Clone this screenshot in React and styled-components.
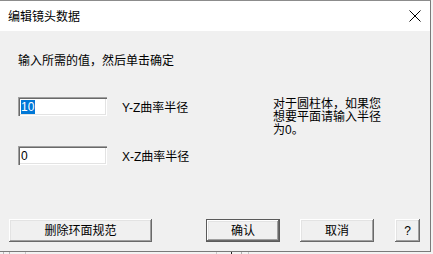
import React from "react";
import styled, { createGlobalStyle } from "styled-components";

const Global = createGlobalStyle`
  html, body { margin: 0; padding: 0; }
  body {
    width: 433px;
    height: 254px;
    overflow: hidden;
    background: #f0f0f0;
    font-family: "Liberation Sans", "Noto Sans CJK SC", sans-serif;
    font-size: 12px;
    color: #000;
  }
`;

const Page = styled.div`
  width: 433px;
  height: 254px;
  display: flex;
  flex-direction: column;
  background: #f3f3f3;
`;

const Window = styled.div`
  width: 431px;
  height: 252px;
  box-sizing: border-box;
  border-top: 1px solid #8c8c8c;
  border-right: 1px solid #7a7a7a;
  border-bottom: 1px solid #7a7a7a;
  display: flex;
  flex-direction: column;
  background: #f0f0f0;
  flex: none;
`;

const TitleBar = styled.div`
  height: 30px;
  background: #fff;
  display: flex;
  align-items: center;
  padding-left: 8px;
  padding-right: 9px;
  flex: none;
`;

const Title = styled.div`
  flex: 1;
  line-height: 14px;
  margin-top: 1px;
`;

const CloseBtn = styled.div`
  width: 12px;
  height: 12px;
  display: flex;
  margin-top: 0px;
`;

const Body = styled.div`
  flex: 1;
  display: flex;
  flex-direction: column;
  padding: 23px 0 9px 0;
`;

const Instruction = styled.div`
  line-height: 14px;
  padding-left: 18px;
`;

const Fields = styled.div`
  display: flex;
  margin-top: 29px;
  padding-left: 18px;
`;

const LeftCol = styled.div`
  width: 255px;
  display: flex;
  flex-direction: column;
  gap: 30px;
`;

const FieldRow = styled.div`
  display: flex;
  align-items: center;
  height: 19px;
`;

const TextBox = styled.div`
  width: 89px;
  height: 19px;
  box-sizing: border-box;
  background: #fff;
  box-shadow: inset 1px 1px #a0a0a0, inset 2px 2px #696969,
    inset -1px -1px #ffffff, inset -2px -2px #e3e3e3;
  padding: 3px 0 0 3px;
  line-height: 14px;
  display: flex;
`;

const Value = styled.span`
  height: 14px;
  line-height: 14px;
  padding: 0 1px 0 0;
  background: ${(p) => (p.$selected ? "#0078d7" : "transparent")};
  color: ${(p) => (p.$selected ? "#fff" : "#000")};
`;

const Label = styled.div`
  margin-left: 15px;
  line-height: 14px;
  margin-top: 3px;
`;

const Note = styled.div`
  margin-top: 1px;
  line-height: 13px;
  white-space: nowrap;
`;

const Buttons = styled.div`
  margin-top: auto;
  display: flex;
  padding-left: 9px;
  gap: 20px;
`;

const Button = styled.div`
  width: ${(p) => p.$w}px;
  height: 23px;
  box-sizing: border-box;
  display: flex;
  align-items: center;
  justify-content: center;
  background: #f0f0f0;
  line-height: 14px;
  margin-right: ${(p) => p.$mr || 0}px;
  margin-left: ${(p) => p.$ml || 0}px;
  padding-top: 1px;
  border: ${(p) => (p.$default ? "1px solid #5a5a5a" : "none")};
  box-shadow: inset -1px -1px #696969, inset 1px 1px #ffffff,
    inset -2px -2px #a0a0a0, inset 2px 2px #e3e3e3;
`;

const Under = styled.div`
  flex: 1;
  background-color: #f3f3f3;
  background-image: linear-gradient(90deg,
    transparent 3px, #b8b8b8 3px, #b8b8b8 4px, transparent 4px,
    transparent 9px, #b8b8b8 9px, #b8b8b8 10px, transparent 10px,
    transparent 25px, #c8c8c8 25px, #c8c8c8 26px, transparent 26px,
    transparent 216px, #c8c8c8 216px, #c8c8c8 217px, transparent 217px,
    transparent 231px, #222 231px, #222 232px, transparent 232px,
    transparent 241px, #b0b0b0 241px, #b0b0b0 242px, transparent 242px,
    transparent 248px, #c8c8c8 248px, #c8c8c8 249px, transparent 249px);
`;

export default function App() {
  return (
    <>
      <Global />
      <Page>
        <Window>
          <TitleBar>
            <Title>编辑镜头数据</Title>
            <CloseBtn>
              <svg width="12" height="12" viewBox="0 0 12 12">
                <path d="M0.5 0.5 L11.5 11.5 M11.5 0.5 L0.5 11.5" stroke="#000" strokeWidth="1" fill="none" />
              </svg>
            </CloseBtn>
          </TitleBar>
          <Body>
            <Instruction>输入所需的值，然后单击确定</Instruction>
            <Fields>
              <LeftCol>
                <FieldRow>
                  <TextBox>
                    <Value $selected>10</Value>
                  </TextBox>
                  <Label>Y-Z曲率半径</Label>
                </FieldRow>
                <FieldRow>
                  <TextBox>
                    <Value>0</Value>
                  </TextBox>
                  <Label>X-Z曲率半径</Label>
                </FieldRow>
              </LeftCol>
              <Note>
                对于圆柱体，如果您
                <br />
                想要平面请输入半径
                <br />
                为0。
              </Note>
            </Fields>
            <Buttons>
              <Button $w={143} $mr={34}>删除环面规范</Button>
              <Button $w={74} $default>确认</Button>
              <Button $w={74}>取消</Button>
              <Button $w={25} $ml={1}>?</Button>
            </Buttons>
          </Body>
        </Window>
        <Under />
      </Page>
    </>
  );
}
